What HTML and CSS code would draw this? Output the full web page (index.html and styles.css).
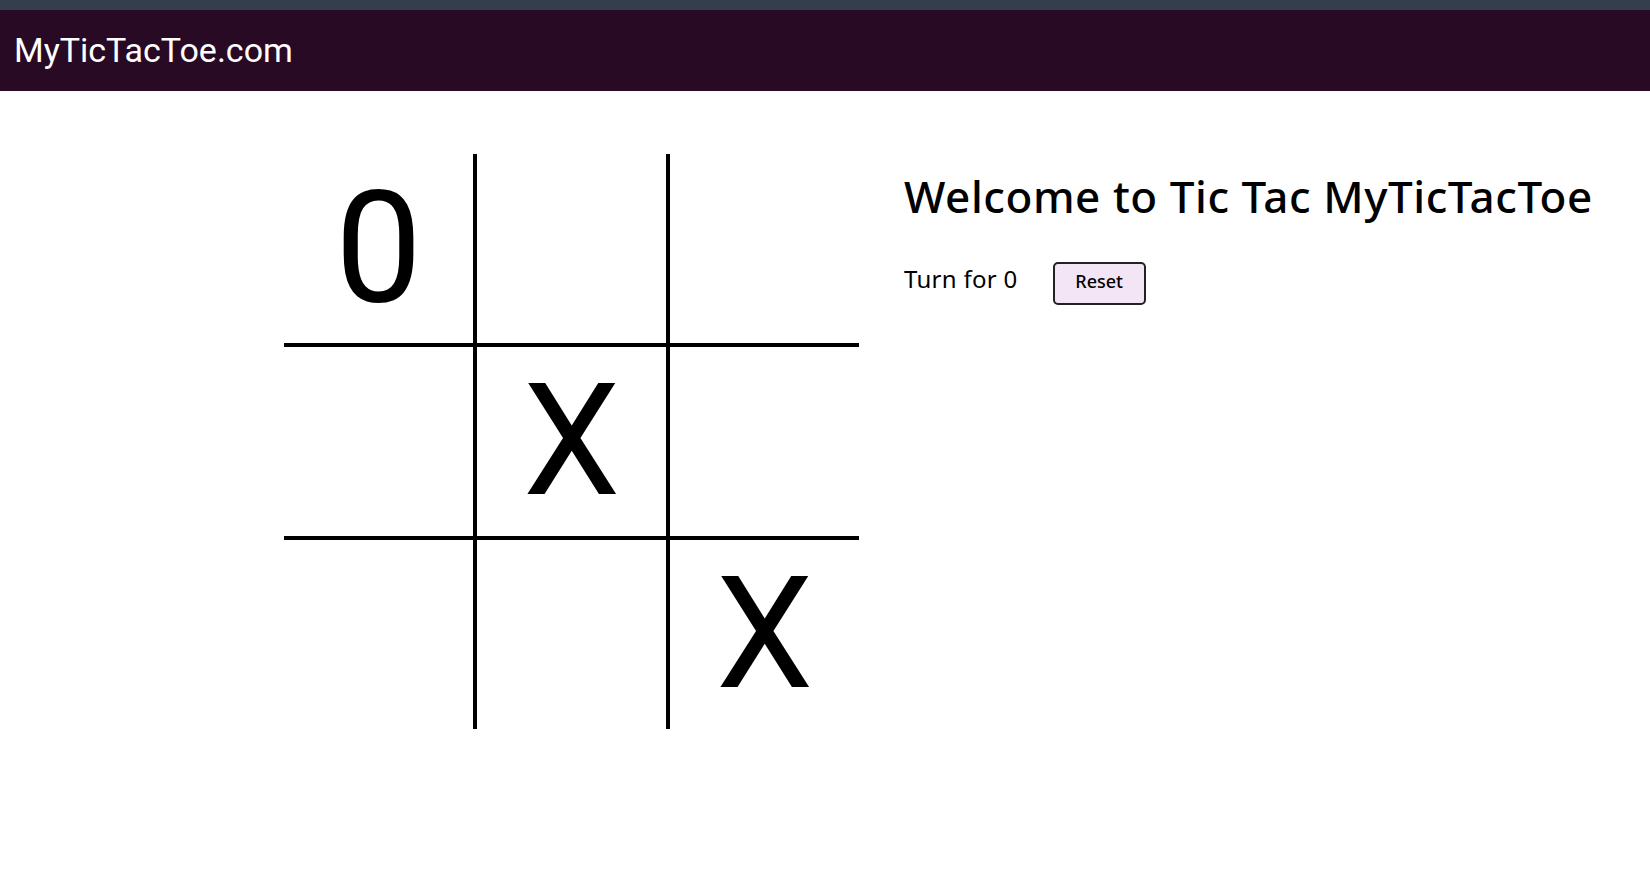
FILE: index.html
```html
<!DOCTYPE html>
<html lang="en">
<head>
<meta charset="utf-8">
<title>MyTicTacToe.com</title>
<link rel="stylesheet" href="styles.css">
</head>
<body>
<div class="top-strip"></div>
<header class="navbar">
  <div class="brand">MyTicTacToe.com</div>
</header>
<main class="main">
  <div class="board">
    <div class="cell">0</div>
    <div class="cell"></div>
    <div class="cell"></div>
    <div class="cell"></div>
    <div class="cell">X</div>
    <div class="cell"></div>
    <div class="cell"></div>
    <div class="cell"></div>
    <div class="cell">X</div>
  </div>
  <section class="info">
    <h1 class="title">Welcome to Tic Tac MyTicTacToe</h1>
    <div class="status-row">
      <span class="turn">Turn for 0</span>
      <button class="reset">Reset</button>
    </div>
  </section>
</main>
</body>
</html>
```
FILE: styles.css
```css
html, body {
  margin: 0;
  padding: 0;
  background: #ffffff;
}
body {
  font-family: Roboto, "Liberation Sans", sans-serif;
  color: #000;
}
.top-strip {
  height: 10px;
  background: #353e4c;
}
.navbar {
  height: 81px;
  background: #290a25;
  display: flex;
  align-items: center;
  padding-left: 14px;
}
.brand {
  font-family: Roboto, sans-serif;
  font-size: 34px;
  font-weight: 400;
  color: #ffffff;
  line-height: 1.235;
}
.main {
  display: flex;
  align-items: flex-start;
  padding: 63px 0 0 284px;
  gap: 43px;
}
.board {
  display: grid;
  grid-template-columns: repeat(3, 189px);
  grid-template-rows: repeat(3, 189px);
  gap: 4px;
  background: #000;
}
.cell {
  background: #fff;
  display: flex;
  align-items: center;
  justify-content: center;
  font-family: Roboto, sans-serif;
  font-size: 155px;
  line-height: 1;
  color: #000;
}
.info {
  display: flex;
  flex-direction: column;
  padding-left: 2px;
}
.title {
  font-family: "Noto Sans", sans-serif;
  font-weight: 500;
  font-size: 44px;
  letter-spacing: 0.55px;
  line-height: 1;
  margin: 20px 0 0 0;
}
.status-row {
  display: flex;
  align-items: baseline;
  gap: 35px;
  margin-top: 44px;
}
.turn {
  font-family: "Noto Sans", sans-serif;
  font-size: 24px;
  font-weight: 400;
  line-height: 1;
  letter-spacing: 0.3px;
}
.reset {
  width: 93px;
  box-sizing: border-box;
  font-family: "Noto Sans", sans-serif;
  font-size: 18px;
  font-weight: 500;
  line-height: 20px;
  padding: 7px 0 12px;
  border: 2px solid #222;
  border-radius: 5px;
  background: #f3e5f5;
  color: #000;
  text-align: center;
}
```
